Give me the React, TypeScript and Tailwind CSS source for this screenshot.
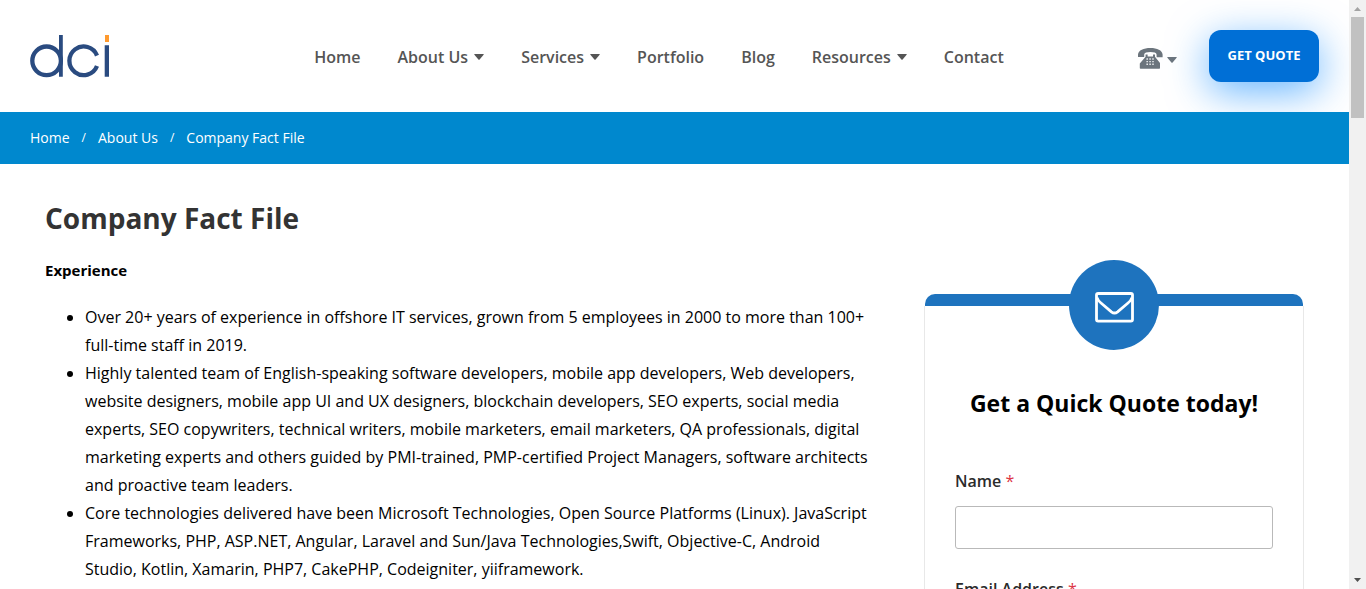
const navItems = [
  { label: "Home" },
  { label: "About Us", menu: true },
  { label: "Services", menu: true },
  { label: "Portfolio" },
  { label: "Blog" },
  { label: "Resources", menu: true },
  { label: "Contact" },
];

const facts = [
  "Over 20+ years of experience in offshore IT services, grown from 5 employees in 2000 to more than 100+ full-time staff in 2019.",
  "Highly talented team of English-speaking software developers, mobile app developers, Web developers, website designers, mobile app UI and UX designers, blockchain developers, SEO experts, social media experts, SEO copywriters, technical writers, mobile marketers, email marketers, QA professionals, digital marketing experts and others guided by PMI-trained, PMP-certified Project Managers, software architects and proactive team leaders.",
  "Core technologies delivered have been Microsoft Technologies, Open Source Platforms (Linux). JavaScript Frameworks, PHP, ASP.NET, Angular, Laravel and Sun/Java Technologies,Swift, Objective-C, Android Studio, Kotlin, Xamarin, PHP7, CakePHP, Codeigniter, yiiframework.",
];

function Logo() {
  return (
    <svg width="80" height="44" viewBox="0 0 80 44" role="img" aria-label="dci" fill="none">
      <g stroke="#2a4b80" strokeWidth="4.3">
        <circle cx="16.6" cy="25.8" r="14.3" />
        <path d="M67 20.6 A14.3 14.3 0 1 0 67 31" />
      </g>
      <path d="M29 0h3.8v41.7H29zM74.7 10.2H79v31.5h-4.3z" fill="#2a4b80" />
      <path d="M75 0h4v7h-4z" fill="#ff9a2e" />
    </svg>
  );
}

function Caret() {
  return (
    <svg width="10" height="6" viewBox="0 0 10 6" aria-hidden="true">
      <path d="M0.8 0h8.4q1 0 .4.8L5.6 5.4q-.6.6-1.2 0L.4.8Q-.2 0 .8 0z" fill="currentColor" />
    </svg>
  );
}

function Phone() {
  return (
    <svg width="25" height="21" viewBox="0 0 25 21" aria-hidden="true">
      <path
        fill="#6c757d"
        d="M0 9V6.6C.4 2.3 5.6 0 12.4 0S24.2 2.3 24.6 6.6V9.2h-6V6.4C18.4 4.8 16 4 12.4 4S6.4 4.8 6.2 6.4V9z"
      />
      <path
        fill="#6c757d"
        d="M7.6 6.6h2v2h5.4v-2h2v2.2l5 6.2V20q0 .7-.7.7H2.5q-.7 0-.7-.7v-4.6L7.6 8.8z"
      />
      <path
        stroke="#e4e6e8"
        strokeWidth="1.4"
        strokeDasharray="1.600 1.300"
        d="M8.400 11h7.600M8.400 13.600h7.600M8.400 16.200h7.600"
      />
    </svg>
  );
}

function Envelope() {
  return (
    <svg width="39" height="31" viewBox="0 0 39 31" fill="none" stroke="#fff" strokeWidth="2.8" aria-hidden="true">
      <rect x="1.5" y="1.5" width="36" height="27.6" rx="1.6" />
      <path d="M2 5.500C2.600 8 4 9.400 6 11L16.400 19.800Q19.500 22.200 22.600 19.800L33 11C35 9.400 36.400 8 37 5.500" />
    </svg>
  );
}

function Field({ id, label, type }: { id: string; label: string; type: string }) {
  return (
    <div className="flex flex-col gap-[13px]">
      <label htmlFor={id} className="text-base leading-6 font-semibold text-[#2b2b2b]">
        {label} <span className="font-normal text-[#dc3545]">*</span>
      </label>
      <input id={id} type={type} required className="h-[43px] w-full rounded-[3px] border border-[#b9b9b9] bg-white px-3" />
    </div>
  );
}

function Header() {
  return (
    <header className="flex h-28 shrink-0 items-center justify-between bg-white px-[30px]">
      <a href="#home" className="block pt-0.5">
        <Logo />
      </a>
      <nav aria-label="Main" className="pt-0.5 pl-[70px]">
        <ul className="flex items-center gap-[37px]">
          {navItems.map((item) => (
            <li key={item.label}>
              <a href={"#" + item.label} className="flex items-center gap-1.5 text-base leading-6 font-semibold text-[#555]">
                {item.label}
                {item.menu && <Caret />}
              </a>
            </li>
          ))}
        </ul>
      </nav>
      <div className="flex items-center gap-8">
        <button type="button" aria-label="Phone numbers" className="flex items-center gap-1 pt-1 text-[#6c757d]">
          <Phone />
          <span className="pt-1">
            <Caret />
          </span>
        </button>
        <a
          href="#quote"
          className="flex h-[52px] w-[110px] items-center justify-center rounded-xl bg-[#006fd6] text-[13px] font-bold text-white shadow-[0_10px_40px_rgba(0,132,255,0.6)]"
        >
          GET QUOTE
        </a>
      </div>
    </header>
  );
}

function Breadcrumb() {
  return (
    <nav aria-label="Breadcrumb" className="relative flex h-[52px] shrink-0 items-center bg-[#0088ce] px-[30px]">
      <ol className="flex items-center gap-3 text-sm text-white">
        <li>
          <a href="#home">Home</a>
        </li>
        <li aria-hidden="true" className="text-xs">/</li>
        <li>
          <a href="#about">About Us</a>
        </li>
        <li aria-hidden="true" className="text-xs">/</li>
        <li aria-current="page">Company Fact File</li>
      </ol>
    </nav>
  );
}

function QuoteCard() {
  return (
    <aside className="mt-[54px] w-[380px] shrink-0">
      <div className="relative mx-px h-3 rounded-t-[10px] bg-[#1e73be]">
        <div className="absolute -top-[34px] left-1/2 flex size-[90px] -translate-x-1/2 items-center justify-center rounded-full bg-[#1e73be] pt-1">
          <Envelope />
        </div>
      </div>
      <form className="flex flex-col gap-7 border-x border-[#e8e8e8] px-[30px] pt-[79px] pb-10">
        <h2 className="mb-5 text-center text-[23px] leading-9 font-bold text-black">Get a Quick Quote today!</h2>
        <Field id="name" label="Name" type="text" />
        <Field id="email" label="Email Address" type="email" />
      </form>
    </aside>
  );
}

function Scrollbar() {
  return (
    <div aria-hidden="true" className="flex w-[17px] shrink-0 flex-col items-center justify-between bg-[#f1f1f1]">
      <div className="flex flex-col items-center">
        <svg width="17" height="17" viewBox="0 0 17 17">
          <path d="M5 11h7L8.500 7z" fill="#a3a3a3" />
        </svg>
        <div className="h-[101px] w-[13px] bg-[#c1c1c1]" />
      </div>
      <svg width="17" height="17" viewBox="0 0 17 17">
        <path d="M5 6h7L8.500 10z" fill="#505050" />
      </svg>
    </div>
  );
}

export default function App() {
  return (
    <div className="flex h-screen overflow-hidden bg-white font-['Open_Sans',sans-serif]">
      <div className="flex min-w-0 flex-1 flex-col overflow-hidden">
        <Header />
        <Breadcrumb />
        <main className="px-[45px] pt-8">
          <h1 className="text-[28px] leading-[44px] font-bold text-[#333]">Company Fact File</h1>
          <div className="flex items-start gap-13">
            <section className="min-w-0 flex-1 pt-4 text-black">
              <h2 className="text-[15px] leading-7 font-bold">Experience</h2>
              <ul className="mt-[19px] list-disc pl-10 text-base leading-7">
                {facts.map((fact) => (
                  <li key={fact}>{fact}</li>
                ))}
              </ul>
            </section>
            <QuoteCard />
          </div>
        </main>
      </div>
      <Scrollbar />
    </div>
  );
}
